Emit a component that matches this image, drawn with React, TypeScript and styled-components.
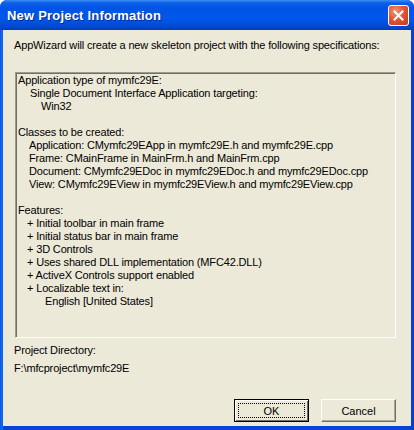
import React from "react";
import styled, { createGlobalStyle } from "styled-components";

const Global = createGlobalStyle`
  html, body { margin: 0; padding: 0; background: #ffffff; }
  * { box-sizing: border-box; }
`;

const Window = styled.div`
  width: 414px;
  height: 430px;
  display: flex;
  flex-direction: column;
  background: linear-gradient(to right, #0a53e8 0px, #166cf5 2px, #0842d8 4px, #0842d8 410px, #0a3cc8 414px);
  border-radius: 7px 7px 0 0;
  overflow: hidden;
  font-family: "Liberation Sans", Arial, sans-serif;
  font-size: 11px;
  letter-spacing: -0.15px;
  color: #000;
`;

const TitleBar = styled.div`
  height: 30px;
  flex: none;
  display: flex;
  align-items: center;
  justify-content: space-between;
  padding: 0 5px 0 7px;
  background: linear-gradient(
    to bottom,
    #3c8cf6 0px,
    #0b5fe8 3px,
    #0054e3 8px,
    #0058ec 18px,
    #004ad4 26px,
    #003dba 30px
  );
`;

const Title = styled.span`
  font-family: "Liberation Sans", Arial, sans-serif;
  font-weight: bold;
  font-size: 13px;
  letter-spacing: 0.2px;
  color: #fff;
  text-shadow: 1px 1px 0 #0a2a8a;
`;

const CloseButton = styled.div`
  width: 21px;
  height: 21px;
  border: 1px solid #fff;
  border-radius: 3px;
  background: radial-gradient(circle at 35% 30%, #f09a7a 0%, #e0553a 45%, #c43a1c 100%);
  display: flex;
  align-items: center;
  justify-content: center;
`;

const Client = styled.div`
  flex: 1;
  margin: 0 3px 4px 3px;
  background: #ece9d8;
  display: flex;
  flex-direction: column;
  padding: 9px 15px 0 11px;
`;

const Intro = styled.div`
  line-height: 13px;
`;

const SpecBox = styled.div`
  margin: 20px 0 0 1px;
  height: 266px;
  border-top: 1px solid #9d9a8e;
  border-left: 1px solid #9d9a8e;
  border-right: 1px solid #ffffff;
  border-bottom: 1px solid #ffffff;
  padding: 1px 0 0 0;
  box-shadow: inset 1px 1px 0 #716f64;
`;

const Line = styled.div<{ $indent: number }>`
  line-height: 13px;
  height: 13px;
  padding-left: ${(p) => p.$indent}px;
  white-space: pre;
`;

const Label = styled.div`
  margin-top: 6px;
  line-height: 13px;
`;

const PathText = styled.div`
  margin-top: 5px;
  line-height: 13px;
`;

const ButtonRow = styled.div`
  margin-top: auto;
  margin-bottom: 4px;
  display: flex;
  justify-content: flex-end;
  gap: 12px;
`;

const Button = styled.button<{ $default?: boolean }>`
  width: 75px;
  height: 23px;
  font-family: "Liberation Sans", Arial, sans-serif;
  font-size: 11px;
  color: #000;
  background: #ece9d8;
  padding: 0;
  border: 1px solid ${(p) => (p.$default ? "#000" : "#ffffff")};
  border-right-color: ${(p) => (p.$default ? "#000" : "#716f64")};
  border-bottom-color: ${(p) => (p.$default ? "#000" : "#716f64")};
  box-shadow: ${(p) =>
    p.$default
      ? "inset 1px 1px 0 #fff, inset -1px -1px 0 #716f64"
      : "inset -1px -1px 0 #aca899"};
  display: flex;
  align-items: center;
  justify-content: center;
`;

const Focus = styled.span`
  width: 67px;
  height: 15px;
  border: 1px dotted #000;
  display: flex;
  align-items: center;
  justify-content: center;
`;

const lines: [number, string][] = [
  [2, "Application type of mymfc29E:"],
  [14, "Single Document Interface Application targeting:"],
  [25, "Win32"],
  [2, ""],
  [2, "Classes to be created:"],
  [13, "Application: CMymfc29EApp in mymfc29E.h and mymfc29E.cpp"],
  [13, "Frame: CMainFrame in MainFrm.h and MainFrm.cpp"],
  [13, "Document: CMymfc29EDoc in mymfc29EDoc.h and mymfc29EDoc.cpp"],
  [13, "View: CMymfc29EView in mymfc29EView.h and mymfc29EView.cpp"],
  [2, ""],
  [2, "Features:"],
  [11, "+ Initial toolbar in main frame"],
  [11, "+ Initial status bar in main frame"],
  [11, "+ 3D Controls"],
  [11, "+ Uses shared DLL implementation (MFC42.DLL)"],
  [11, "+ ActiveX Controls support enabled"],
  [11, "+ Localizable text in:"],
  [29, "English [United States]"],
];

const App = () => {
  return (
    <>
      <Global />
      <Window>
        <TitleBar>
          <Title>New Project Information</Title>
          <CloseButton>
            <svg width="11" height="11" viewBox="0 0 11 11">
              <path d="M1.5 1.5 L9.5 9.5 M9.5 1.5 L1.5 9.5" stroke="#fff" strokeWidth="2" strokeLinecap="square" />
            </svg>
          </CloseButton>
        </TitleBar>
        <Client>
          <Intro>AppWizard will create a new skeleton project with the following specifications:</Intro>
          <SpecBox>
            {lines.map(([indent, text], i) => (
              <Line key={i} $indent={indent}>
                {text}
              </Line>
            ))}
          </SpecBox>
          <Label>Project Directory:</Label>
          <PathText>F:\mfcproject\mymfc29E</PathText>
          <ButtonRow>
            <Button $default>
              <Focus>OK</Focus>
            </Button>
            <Button>Cancel</Button>
          </ButtonRow>
        </Client>
      </Window>
    </>
  );
};

export default App;
